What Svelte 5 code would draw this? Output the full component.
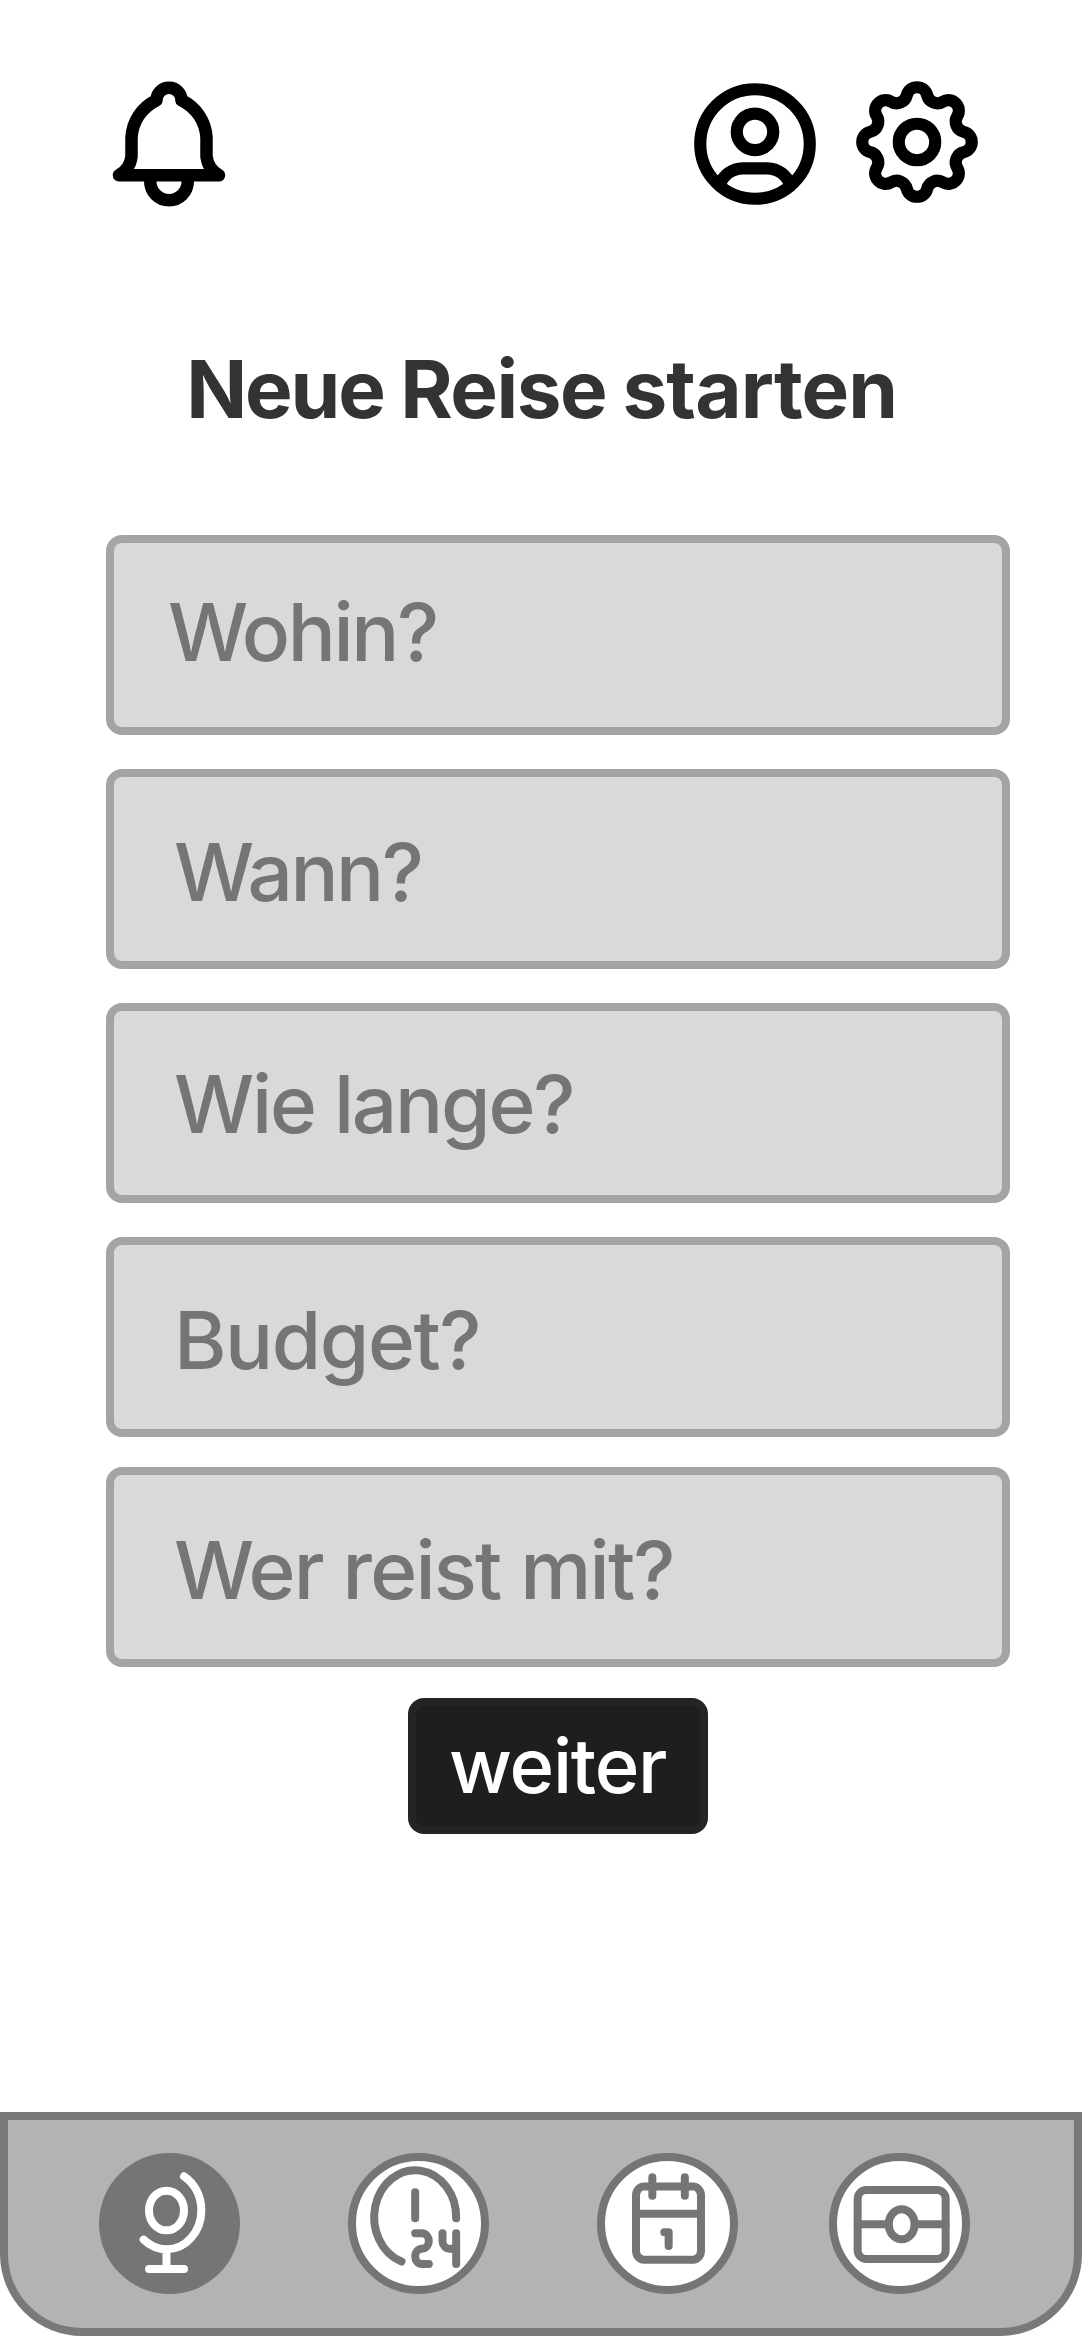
<script>
  const fields = [
    { id: 'where', text: 'Wohin?' },
    { id: 'when', text: 'Wann?' },
    { id: 'duration', text: 'Wie lange?' },
    { id: 'budget', text: 'Budget?' },
    { id: 'people', text: 'Wer reist mit?' }
  ];
</script>

<div class="screen">
  <header>
    <svg class="icon bell" viewBox="0 0 24 24">
      <path d="M10 5a2 2 0 1 1 4 0a7 7 0 0 1 4 6v3a4 4 0 0 0 2 3h-16a4 4 0 0 0 2 -3v-3a7 7 0 0 1 4 -6" />
      <path d="M9 17v1a3 3 0 0 0 6 0v-1" />
    </svg>
    <div class="account">
      <svg class="icon user" viewBox="0 0 24 24">
        <circle cx="12" cy="12" r="9" />
        <circle cx="12" cy="10" r="3" />
        <path d="M6.168 18.849a4 4 0 0 1 3.832 -2.849h4a4 4 0 0 1 3.834 2.855" />
      </svg>
      <svg class="icon gear" viewBox="0 0 24 24">
        <path d="M10.325 4.317c.426 -1.756 2.924 -1.756 3.35 0a1.724 1.724 0 0 0 2.573 1.066c1.543 -.94 3.31 .826 2.37 2.37a1.724 1.724 0 0 0 1.065 2.572c1.756 .426 1.756 2.924 0 3.35a1.724 1.724 0 0 0 -1.066 2.573c.94 1.543 -.826 3.31 -2.37 2.37a1.724 1.724 0 0 0 -2.572 1.065c-.426 1.756 -2.924 1.756 -3.35 0a1.724 1.724 0 0 0 -2.573 -1.066c-1.543 .94 -3.31 -.826 -2.37 -2.37a1.724 1.724 0 0 0 -1.065 -2.572c-1.756 -.426 -1.756 -2.924 0 -3.35a1.724 1.724 0 0 0 1.066 -2.573c-.94 -1.543 .826 -3.31 2.37 -2.37c1 .608 2.296 .07 2.572 -1.065z" />
        <circle cx="12" cy="12" r="3" />
      </svg>
    </div>
  </header>

  <h1><span class="neue">Neue</span> <span class="reise">Reise</span> <span class="starten">starten</span></h1>

  <main>
    {#each fields as field (field.id)}
      <div class="field {field.id}">{field.text}</div>
    {/each}
    <button class="next">weiter</button>
  </main>

  <nav>
    <svg class="tab mic" viewBox="298 189 423 423">
      <circle class="solid" cx="509.5" cy="400.5" r="211.5" />
      <ellipse cx="500.5" cy="361.5" rx="52.5" ry="59.5" />
      <path d="M553 259A105 117 0 0 1 605 361A105 117 0 0 1 500.5 478A105 117 0 0 1 432 449M500.5 478V537M448 537H553" />
    </svg>
    <svg class="tab clock" viewBox="84 70 423 423">
      <circle class="disc" cx="295.5" cy="281.5" r="199.5" />
      <path d="M408.5 266A123 141 0 1 0 244.5 395.5M285.5 188V266" />
      <path d="M285.5 311h20.5a20.5 23 0 0 1 20.5 23a20.5 23 0 0 1 -20.5 23a20.5 23 0 0 0 -20.5 23a20.5 23 0 0 0 20.5 23h20.5" />
      <path d="M367.5 311v23a20.5 23 0 0 0 20.5 23h20.5M408.5 311v92" />
    </svg>
    <svg class="tab calendar" viewBox="81 70 423 423">
      <circle class="disc" cx="292.5" cy="281.5" r="199.5" />
      <rect x="198" y="170.5" width="195" height="219.5" rx="24" ry="27" />
      <path d="M247 143V198M344.5 143V198M198 252H393M283 307.5H296V349" />
    </svg>
    <svg class="tab money" viewBox="58 189 423 423">
      <circle class="disc" cx="269.5" cy="400.5" r="199.5" />
      <rect x="144" y="300" width="264" height="207" rx="26" />
      <ellipse cx="276" cy="403" rx="39" ry="45" />
      <path d="M144 403H237M315 403H408" />
    </svg>
  </nav>
</div>

<style>
  :global(body) {
    margin: 0;
    background: #fff;
  }

  .screen {
    display: flex;
    flex-direction: column;
    box-sizing: border-box;
    width: 1082px;
    height: 2336px;
    background: #fff;
    font-family: Inter, "Liberation Sans", sans-serif;
    font-size: 80px;
    line-height: 96px;
    white-space: nowrap;
  }

  header {
    display: flex;
    justify-content: space-between;
    align-items: flex-start;
    box-sizing: border-box;
    height: 341px;
    padding: 69px 92px 0 94px;
  }

  .account {
    display: flex;
    gap: 16px;
    align-items: flex-start;
  }

  svg {
    display: block;
    flex: none;
    fill: none;
    stroke-linecap: round;
    stroke-linejoin: round;
  }

  .icon {
    width: 146px;
    height: 146px;
    stroke: #000;
    stroke-width: 2;
  }

  .bell {
    width: 150px;
    height: 150px;
  }

  .user {
    margin-top: 2px;
  }

  h1 {
    margin: 0;
    height: 194px;
    padding-left: 186.2px;
    color: #333;
    font-size: 80px;
    font-weight: 700;
    letter-spacing: -2.6px;
  }

  .neue {
    letter-spacing: -2.1px;
  }

  .reise {
    letter-spacing: -1.5px;
  }

  .starten {
    letter-spacing: -0.9px;
  }

  main {
    display: flex;
    flex-direction: column;
    gap: 34px;
    width: 904px;
    margin-left: 106px;
  }

  .field {
    box-sizing: border-box;
    height: 200px;
    padding: 47px 0 0 60px;
    border: 8px solid #a4a4a4;
    border-radius: 16px;
    background: #d9d9d9;
    color: #757575;
    font-weight: 500;
  }

  .where {
    padding: 41px 0 0 54px;
    letter-spacing: -2.4px;
  }

  .when {
    letter-spacing: -2.5px;
  }

  .duration {
    padding-top: 45px;
    letter-spacing: -2.2px;
  }

  .budget {
    letter-spacing: -1.45px;
  }

  .people {
    margin-top: -4px;
    letter-spacing: -1.75px;
  }

  .next {
    align-self: center;
    box-sizing: border-box;
    width: 300px;
    height: 136px;
    margin-top: -3px;
    padding: 0 0 2px 33px;
    border: 8px solid #242424;
    border-radius: 16px;
    background: #1e1e1e;
    color: #fff;
    font: 500 76px/112px Inter, "Liberation Sans", sans-serif;
    letter-spacing: -1.25px;
    text-align: left;
  }

  nav {
    display: flex;
    align-items: flex-start;
    box-sizing: border-box;
    height: 224px;
    margin-top: auto;
    padding: 33px 0 0 91.3px;
    border: 8px solid #797979;
    border-radius: 0 0 82px 82px;
    background: #b3b3b3;
  }

  .tab {
    width: 141px;
    height: 141px;
    stroke: #757575;
    stroke-width: 24;
  }

  .mic {
    stroke: #fff;
  }

  .clock,
  .calendar {
    margin-left: 108px;
  }

  .money {
    margin-left: 91px;
  }

  .solid {
    fill: #757575;
    stroke: none;
  }

  .disc {
    fill: #fff;
  }
</style>
